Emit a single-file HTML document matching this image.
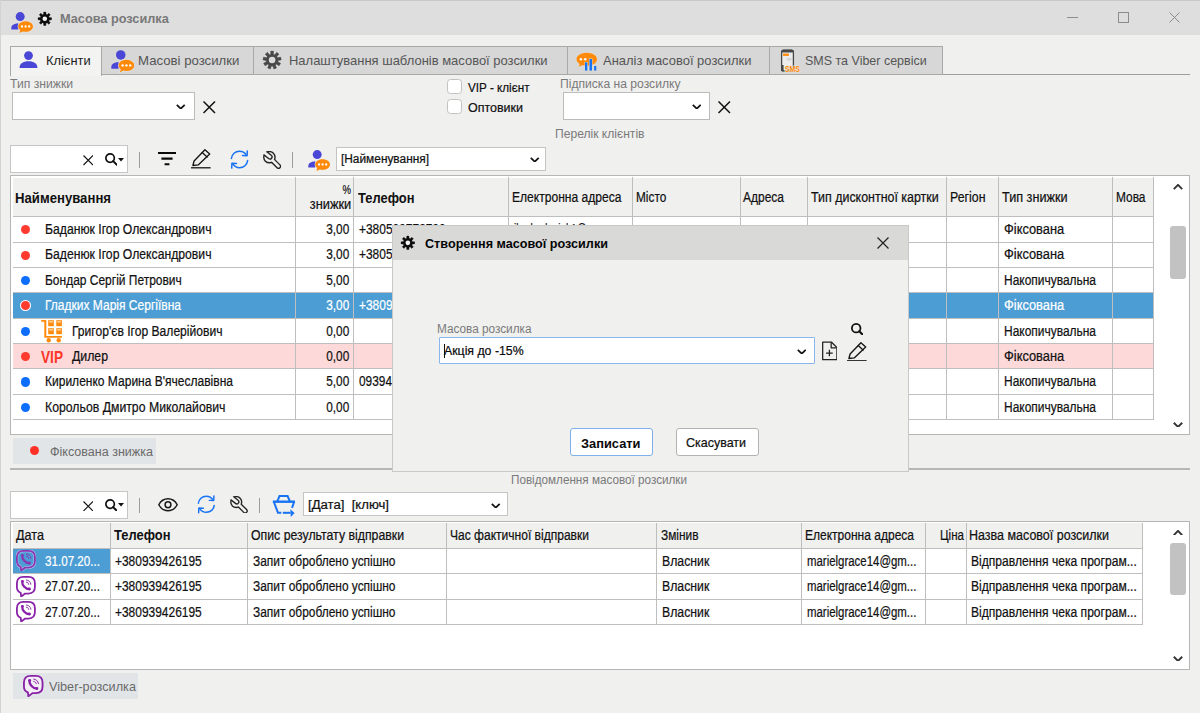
<!DOCTYPE html><html lang="uk"><head><meta charset="utf-8"><title>Масова розсилка</title><style>
html,body{margin:0;padding:0}body{width:1200px;height:713px;position:relative;overflow:hidden;background:#f0f0ef;font-family:"Liberation Sans", sans-serif;}
.a{position:absolute;box-sizing:border-box}.t{position:absolute;white-space:pre;line-height:1;transform-origin:0 50%}.k{-webkit-text-stroke:.22px currentColor}.t.r{transform-origin:100% 50%}
</style></head><body>
<div class="a" style="left:0px;top:0px;width:1200px;height:35px;background:#dedede;"></div>
<div class="a" style="left:0px;top:0px;width:1200px;height:1px;background:#c8c8c8;"></div>
<div class="a" style="left:0px;top:0px;width:1px;height:713px;background:#d3d3d3;"></div>
<svg class="a" style="left:11px;top:11.5px;" width="22.0" height="21.0" viewBox="0 0 22 21"><circle cx="9.2" cy="4.6" r="4.5" fill="#4b47d6"/><path d="M0.3 17.6 L0.3 16 C0.3 13.2 3 11.6 7.2 11.3 L7.2 17.6 Z" fill="#4b47d6"/><ellipse cx="14.6" cy="14.6" rx="8" ry="5.6" fill="#f0f0ef" opacity=".0"/><path d="M14.6 9.2 C18.8 9.2 22 11.5 22 14.5 C22 17.5 18.8 19.8 14.6 19.8 C13.6 19.8 12.7 19.7 11.8 19.4 L8.4 21 L9.2 18.1 C8 17.2 7.2 15.9 7.2 14.5 C7.2 11.5 10.4 9.2 14.6 9.2 Z" fill="#ff8a0a" stroke="#ebebea" stroke-width="1" paint-order="stroke"/><circle cx="11" cy="14.5" r="1.15" fill="#fff"/><circle cx="14.6" cy="14.5" r="1.15" fill="#fff"/><circle cx="18.2" cy="14.5" r="1.15" fill="#fff"/></svg>
<svg class="a" style="left:37.6px;top:11.6px;overflow:visible;" width="13.6" height="13.6" viewBox="0 0 13.6 13.6"><path d="M5.61 2.33 L5.74 0.08 L7.86 0.08 L7.99 2.33 L9.12 2.80 L10.80 1.30 L12.30 2.80 L10.80 4.48 L11.27 5.61 L13.52 5.74 L13.52 7.86 L11.27 7.99 L10.80 9.12 L12.30 10.80 L10.80 12.30 L9.12 10.80 L7.99 11.27 L7.86 13.52 L5.74 13.52 L5.61 11.27 L4.48 10.80 L2.80 12.30 L1.30 10.80 L2.80 9.12 L2.33 7.99 L0.08 7.86 L0.08 5.74 L2.33 5.61 L2.80 4.48 L1.30 2.80 L2.80 1.30 L4.48 2.80 Z" fill="none" stroke="#ececec" stroke-width="1.6" stroke-linejoin="round"/><path d="M5.61 2.33 L5.74 0.08 L7.86 0.08 L7.99 2.33 L9.12 2.80 L10.80 1.30 L12.30 2.80 L10.80 4.48 L11.27 5.61 L13.52 5.74 L13.52 7.86 L11.27 7.99 L10.80 9.12 L12.30 10.80 L10.80 12.30 L9.12 10.80 L7.99 11.27 L7.86 13.52 L5.74 13.52 L5.61 11.27 L4.48 10.80 L2.80 12.30 L1.30 10.80 L2.80 9.12 L2.33 7.99 L0.08 7.86 L0.08 5.74 L2.33 5.61 L2.80 4.48 L1.30 2.80 L2.80 1.30 L4.48 2.80 Z" fill="#0c0c0c" stroke="#0c0c0c" stroke-width="0.5" stroke-linejoin="round"/><circle cx="6.8" cy="6.8" r="2.3120000000000003" fill="#f4f4f4"/></svg>
<span class="t" style="top:11.85px;font-size:13.5px;height:13.5px;color:#787878;font-weight:700;left:60.30px;transform:scaleX(0.9429);">Масова розсилка</span>
<div class="a" style="left:1067px;top:16.8px;width:11px;height:1.5px;background:#8e8e8e;"></div>
<div class="a" style="left:1118px;top:12px;width:11px;height:11px;border:1px solid #8c8c8c;"></div>
<svg class="a" style="left:1169px;top:12px;" width="11" height="11" viewBox="0 0 11 11"><path d="M0.5 0.5 L10.5 10.5 M10.5 0.5 L0.5 10.5" stroke="#8c8c8c" stroke-width="1.0" fill="none"/></svg>
<div class="a" style="left:10px;top:74px;width:1180px;height:1px;background:#9f9f9f;"></div>
<div class="a" style="left:101.4px;top:46px;width:152.6px;height:29px;background:#d7d7d7;border:1px solid #a9a9a9;"></div>
<div class="a" style="left:253px;top:46px;width:315px;height:29px;background:#d7d7d7;border:1px solid #a9a9a9;"></div>
<div class="a" style="left:567px;top:46px;width:203px;height:29px;background:#d7d7d7;border:1px solid #a9a9a9;"></div>
<div class="a" style="left:769px;top:46px;width:173.60000000000002px;height:29px;background:#d7d7d7;border:1px solid #a9a9a9;"></div>
<div class="a" style="left:10px;top:46px;width:92px;height:29.5px;background:#f3f3f2;border:1px solid #a9a9a9;border-bottom:none;"></div>
<svg class="a" style="left:19.4px;top:51.4px;" width="19.0" height="17.0" viewBox="0 0 19 17"><circle cx="9.5" cy="4.6" r="4.4" fill="#4b47d6"/><path d="M0.6 17 C0.6 12.4 4 10.3 9.5 10.3 C15 10.3 18.4 12.4 18.4 17 Z" fill="#4b47d6"/></svg>
<span class="t" style="top:53.75px;font-size:13.5px;height:13.5px;color:#1c1c1c;left:46.00px;transform:scaleX(0.9527);">Клієнти</span>
<svg class="a" style="left:110.7px;top:50.4px;" width="23.3" height="22.3" viewBox="0 0 22 21"><circle cx="9.2" cy="4.6" r="4.5" fill="#4b47d6"/><path d="M0.3 17.6 L0.3 16 C0.3 13.2 3 11.6 7.2 11.3 L7.2 17.6 Z" fill="#4b47d6"/><ellipse cx="14.6" cy="14.6" rx="8" ry="5.6" fill="#f0f0ef" opacity=".0"/><path d="M14.6 9.2 C18.8 9.2 22 11.5 22 14.5 C22 17.5 18.8 19.8 14.6 19.8 C13.6 19.8 12.7 19.7 11.8 19.4 L8.4 21 L9.2 18.1 C8 17.2 7.2 15.9 7.2 14.5 C7.2 11.5 10.4 9.2 14.6 9.2 Z" fill="#ff8a0a" stroke="#ebebea" stroke-width="1" paint-order="stroke"/><circle cx="11" cy="14.5" r="1.15" fill="#fff"/><circle cx="14.6" cy="14.5" r="1.15" fill="#fff"/><circle cx="18.2" cy="14.5" r="1.15" fill="#fff"/></svg>
<span class="t" style="top:53.75px;font-size:13.5px;height:13.5px;color:#555;left:138.00px;transform:scaleX(0.9772);">Масові розсилки</span>
<svg class="a" style="left:263px;top:51px;overflow:visible;" width="18.2" height="18.2" viewBox="0 0 18.2 18.2"><path d="M7.73 3.25 L7.65 0.12 L10.55 0.12 L10.47 3.25 L11.81 3.74 L13.76 1.28 L15.99 3.15 L13.91 5.50 L14.62 6.73 L17.69 6.11 L18.20 8.97 L15.10 9.44 L14.85 10.84 L17.61 12.33 L16.15 14.85 L13.48 13.21 L12.39 14.13 L13.54 17.04 L10.81 18.04 L9.81 15.06 L8.39 15.06 L7.39 18.04 L4.66 17.04 L5.81 14.13 L4.72 13.21 L2.05 14.85 L0.59 12.33 L3.35 10.84 L3.10 9.44 L0.00 8.97 L0.51 6.11 L3.58 6.73 L4.29 5.50 L2.21 3.15 L4.44 1.28 L6.39 3.74 Z" fill="none" stroke="#dedede" stroke-width="1.6" stroke-linejoin="round"/><path d="M7.73 3.25 L7.65 0.12 L10.55 0.12 L10.47 3.25 L11.81 3.74 L13.76 1.28 L15.99 3.15 L13.91 5.50 L14.62 6.73 L17.69 6.11 L18.20 8.97 L15.10 9.44 L14.85 10.84 L17.61 12.33 L16.15 14.85 L13.48 13.21 L12.39 14.13 L13.54 17.04 L10.81 18.04 L9.81 15.06 L8.39 15.06 L7.39 18.04 L4.66 17.04 L5.81 14.13 L4.72 13.21 L2.05 14.85 L0.59 12.33 L3.35 10.84 L3.10 9.44 L0.00 8.97 L0.51 6.11 L3.58 6.73 L4.29 5.50 L2.21 3.15 L4.44 1.28 L6.39 3.74 Z" fill="#484848" stroke="#484848" stroke-width="0.5" stroke-linejoin="round"/><circle cx="9.1" cy="9.1" r="3.276" fill="#dadada"/></svg>
<span class="t" style="top:53.75px;font-size:13.5px;height:13.5px;color:#555;left:289.40px;transform:scaleX(0.9607);">Налаштування шаблонів масової розсилки</span>
<svg class="a" style="left:576px;top:50px;" width="22" height="21" viewBox="0 0 22 21"><path d="M10.7 2.4 C16.6 2.4 21.3 5.4 21.3 9.3 C21.3 13.2 16.6 16.2 10.7 16.2 C9.2 16.2 7.8 16 6.5 15.6 L2 17.2 L3.4 13.9 C1.4 12.7 0.2 11.1 0.2 9.3 C0.2 5.4 4.8 2.4 10.7 2.4 Z" fill="#ff8a0a" stroke="#e2e2e2" stroke-width=".6"/><circle cx="4.9" cy="9.2" r="1.25" fill="#fff"/><circle cx="9.2" cy="9.2" r="1.25" fill="#fff"/><g fill="#1873f5" stroke="#dedad2" stroke-width=".9" paint-order="stroke"><rect x="9" y="12.4" width="2.3" height="8.2"/><rect x="13.5" y="9" width="2.5" height="11.6"/><rect x="18.1" y="16" width="2.2" height="4.6"/></g></svg>
<span class="t" style="top:53.75px;font-size:13.5px;height:13.5px;color:#555;left:603.30px;transform:scaleX(0.9602);">Аналіз масової розсилки</span>
<svg class="a" style="left:780px;top:49px;" width="21" height="23.5" viewBox="0 0 21 23.5"><rect x="1.6" y="1.4" width="11.8" height="20.4" rx="1.6" fill="#ececec" stroke="#484848" stroke-width="1.3"/><path d="M1 3.4 C1 1.6 2 0.5 3.6 0.5 L11.4 0.5 C13 0.5 14 1.6 14 3.4 Z" fill="#484848"/><path d="M1 16 L3.6 16 L3.6 22.4 L2.4 22.4 C1.6 22.4 1 21.8 1 21 Z" fill="#484848"/><rect x="3" y="4.6" width="5.9" height="2.3" fill="#ff8a0a"/><rect x="6.6" y="9" width="5" height="2.4" rx="1" fill="#d4d4d4"/><text x="4.8" y="22.7" font-family="Liberation Sans, sans-serif" font-weight="700" font-size="9.6" fill="#ff8a0a" stroke="#e6e4e0" stroke-width="1.1" paint-order="stroke" textLength="15.2" lengthAdjust="spacingAndGlyphs">SMS</text></svg>
<span class="t" style="top:53.75px;font-size:13.5px;height:13.5px;color:#555;left:805.00px;transform:scaleX(0.9251);">SMS та Viber сервіси</span>
<span class="t" style="top:77.65px;font-size:12.3px;height:12.3px;color:#7a7a7a;left:10.30px;transform:scaleX(0.9921);">Тип знижки</span>
<div class="a" style="left:12.4px;top:92.4px;width:182.4px;height:27.4px;background:#fff;border:1.3px solid #bcbcbc;"></div>
<svg class="a" style="left:176px;top:103.6px;" width="9.5" height="5.6" viewBox="0 0 9.5 5.6"><path d="M0.8 0.8 L4.75 4.699999999999999 L8.7 0.8" stroke="#111" stroke-width="1.7" fill="none" stroke-linejoin="miter"/></svg>
<svg class="a" style="left:203px;top:101px;" width="12.5" height="12.5" viewBox="0 0 12.5 12.5"><path d="M0.5 0.5 L12.0 12.0 M12.0 0.5 L0.5 12.0" stroke="#111" stroke-width="1.5" fill="none"/></svg>
<div class="a" style="left:446.9px;top:78.9px;width:15.6px;height:15.6px;background:#fff;border:1.4px solid #c2c2c2;border-radius:3.5px;"></div>
<div class="a" style="left:446.9px;top:98.9px;width:15.6px;height:15.6px;background:#fff;border:1.4px solid #c2c2c2;border-radius:3.5px;"></div>
<span class="t k" style="top:81.90px;font-size:12.4px;height:12.4px;color:#111;left:468.00px;transform:scaleX(0.9439);">VIP - клієнт</span>
<span class="t k" style="top:101.90px;font-size:12.4px;height:12.4px;color:#111;left:468.00px;transform:scaleX(1.0069);">Оптовики</span>
<span class="t" style="top:77.65px;font-size:12.3px;height:12.3px;color:#7a7a7a;left:560.00px;transform:scaleX(0.9854);">Підписка на розсилку</span>
<div class="a" style="left:562.6px;top:92.4px;width:147.2px;height:27.4px;background:#fff;border:1.3px solid #bcbcbc;"></div>
<svg class="a" style="left:691.5px;top:103.6px;" width="9.5" height="5.6" viewBox="0 0 9.5 5.6"><path d="M0.8 0.8 L4.75 4.699999999999999 L8.7 0.8" stroke="#111" stroke-width="1.7" fill="none" stroke-linejoin="miter"/></svg>
<svg class="a" style="left:718px;top:101px;" width="12.5" height="12.5" viewBox="0 0 12.5 12.5"><path d="M0.5 0.5 L12.0 12.0 M12.0 0.5 L0.5 12.0" stroke="#111" stroke-width="1.5" fill="none"/></svg>
<span class="t" style="top:128.05px;font-size:12.3px;height:12.3px;color:#7a7a7a;left:554.50px;transform:scaleX(0.9830);">Перелік клієнтів</span>
<div class="a" style="left:10px;top:145px;width:117.5px;height:28px;background:#fff;border:1px solid #c6c6c6;"></div>
<svg class="a" style="left:82.5px;top:155px;" width="10.5" height="10.5" viewBox="0 0 10.5 10.5"><path d="M0.5 0.5 L10.0 10.0 M10.0 0.5 L0.5 10.0" stroke="#111" stroke-width="1.1" fill="none"/></svg>
<svg class="a" style="left:104.5px;top:153px;" width="12.5" height="12.5" viewBox="0 0 12.5 12.5"><circle cx="5.1" cy="5.1" r="4.25" stroke="#111" stroke-width="1.7" fill="none"/><path d="M8.16 8.16 L11.8 11.8" stroke="#111" stroke-width="2.0" stroke-linecap="round"/></svg>
<svg class="a" style="left:117.5px;top:157.5px;" width="6" height="4" viewBox="0 0 6 4"><path d="M0 0 L6 0 L3 3.6 Z" fill="#111"/></svg>
<div class="a" style="left:138.6px;top:152px;width:1.5px;height:15.5px;background:#9c9c9c;"></div>
<svg class="a" style="left:158px;top:152px;" width="18" height="14" viewBox="0 0 18 14"><path d="M0 1 L18 1 M3.4 6.6 L14.6 6.6 M6.6 12.2 L11.4 12.2" stroke="#0a0a0a" stroke-width="2.1" fill="none"/></svg>
<svg class="a" style="left:190.6px;top:149.2px;" width="20" height="19.5" viewBox="0 0 20 19.5"><g fill="none" stroke="#151515" stroke-width="1.35" stroke-linejoin="round" stroke-linecap="round"><path d="M1.9 16.5 L3.1 12 L13.9 0.7 L18.7 5.1 L7.2 15.9 Z"/><path d="M11.2 3.6 L16.1 8"/></g><path d="M0 18.8 L19.6 18.8" stroke="#151515" stroke-width="1.3"/></svg>
<svg class="a" style="left:230px;top:149.7px;" width="19" height="19" viewBox="0 0 19 19"><g fill="none" stroke="#1873f5" stroke-width="1.5" stroke-linecap="round" stroke-linejoin="round"><path d="M1.4 8.4 C1.9 4.3 5.2 1.3 9.4 1.3 C12.4 1.3 14.9 2.8 16.3 5.1"/><path d="M17.3 0.9 L17.1 5.7 L12.5 5.5"/><path d="M17.6 10.6 C17.1 14.7 13.8 17.7 9.6 17.7 C6.6 17.7 4.1 16.2 2.7 13.9"/><path d="M1.7 18.1 L1.9 13.3 L6.5 13.5"/></g></svg>
<svg class="a" style="left:263px;top:150.5px;" width="18" height="18" viewBox="0 0 18 18"><defs><clipPath id="wc263_150"><circle cx="6.4" cy="6.2" r="6.3"/></clipPath></defs><circle cx="6.4" cy="6.2" r="6.3" fill="#222"/><path d="M8 7.8 L15.5 15.3" stroke="#222" stroke-width="5.4" stroke-linecap="round"/><circle cx="6.4" cy="6.2" r="4.9" fill="#f0f0ef"/><path d="M8 7.8 L15.5 15.3" stroke="#f0f0ef" stroke-width="2.7" stroke-linecap="round"/><path d="M-1 -0.4 L6.9 5.9" stroke="#222" stroke-width="5.6" stroke-linecap="round" clip-path="url(#wc263_150)"/><path d="M-3 -2 L6.9 5.9" stroke="#f0f0ef" stroke-width="2.9" stroke-linecap="round"/></svg>
<div class="a" style="left:291.8px;top:152px;width:1.5px;height:15.5px;background:#9c9c9c;"></div>
<svg class="a" style="left:308px;top:149.5px;" width="22.0" height="21.0" viewBox="0 0 22 21"><circle cx="9.2" cy="4.6" r="4.5" fill="#4b47d6"/><path d="M0.3 17.6 L0.3 16 C0.3 13.2 3 11.6 7.2 11.3 L7.2 17.6 Z" fill="#4b47d6"/><ellipse cx="14.6" cy="14.6" rx="8" ry="5.6" fill="#f0f0ef" opacity=".0"/><path d="M14.6 9.2 C18.8 9.2 22 11.5 22 14.5 C22 17.5 18.8 19.8 14.6 19.8 C13.6 19.8 12.7 19.7 11.8 19.4 L8.4 21 L9.2 18.1 C8 17.2 7.2 15.9 7.2 14.5 C7.2 11.5 10.4 9.2 14.6 9.2 Z" fill="#ff8a0a" stroke="#ebebea" stroke-width="1" paint-order="stroke"/><circle cx="11" cy="14.5" r="1.15" fill="#fff"/><circle cx="14.6" cy="14.5" r="1.15" fill="#fff"/><circle cx="18.2" cy="14.5" r="1.15" fill="#fff"/></svg>
<div class="a" style="left:336.4px;top:146.8px;width:209.2px;height:23.8px;background:#fff;border:1.3px solid #c4c4c4;"></div>
<span class="t k" style="top:153.20px;font-size:12px;height:12px;color:#111;left:341.00px;transform:scaleX(0.9895);">[Найменування]</span>
<svg class="a" style="left:530px;top:156.5px;" width="9.5" height="5.6" viewBox="0 0 9.5 5.6"><path d="M0.8 0.8 L4.75 4.699999999999999 L8.7 0.8" stroke="#111" stroke-width="1.7" fill="none" stroke-linejoin="miter"/></svg>
<div class="a" style="left:10px;top:175.3px;width:1180px;height:259.4px;background:#fff;border:1px solid #b5b5b5;"></div>
<div class="a" style="left:12.6px;top:178px;width:1140.4px;height:39px;background:#f0f0ef;"></div>
<div class="a" style="left:12.6px;top:293px;width:1140.4px;height:25.2px;background:#4b9dd4;"></div>
<div class="a" style="left:12.6px;top:343.6px;width:1140.4px;height:25.4px;background:#fdd9d9;"></div>
<div class="a" style="left:294.5px;top:177px;width:1px;height:243px;background:#bebebe;"></div>
<div class="a" style="left:353.0px;top:177px;width:1px;height:243px;background:#bebebe;"></div>
<div class="a" style="left:508.0px;top:177px;width:1px;height:243px;background:#bebebe;"></div>
<div class="a" style="left:631.5px;top:177px;width:1px;height:243px;background:#bebebe;"></div>
<div class="a" style="left:740.0px;top:177px;width:1px;height:243px;background:#bebebe;"></div>
<div class="a" style="left:806.5px;top:177px;width:1px;height:243px;background:#bebebe;"></div>
<div class="a" style="left:945.5px;top:177px;width:1px;height:243px;background:#bebebe;"></div>
<div class="a" style="left:997.5px;top:177px;width:1px;height:243px;background:#bebebe;"></div>
<div class="a" style="left:1111.5px;top:177px;width:1px;height:243px;background:#bebebe;"></div>
<div class="a" style="left:1152.5px;top:177px;width:1px;height:243px;background:#bebebe;"></div>
<div class="a" style="left:12.6px;top:216px;width:1140.9px;height:1px;background:#bebebe;"></div>
<div class="a" style="left:12.6px;top:242px;width:1140.9px;height:1px;background:#bebebe;"></div>
<div class="a" style="left:12.6px;top:267px;width:1140.9px;height:1px;background:#bebebe;"></div>
<div class="a" style="left:12.6px;top:292px;width:1140.9px;height:1px;background:#bebebe;"></div>
<div class="a" style="left:12.6px;top:318px;width:1140.9px;height:1px;background:#bebebe;"></div>
<div class="a" style="left:12.6px;top:343px;width:1140.9px;height:1px;background:#bebebe;"></div>
<div class="a" style="left:12.6px;top:368px;width:1140.9px;height:1px;background:#bebebe;"></div>
<div class="a" style="left:12.6px;top:394px;width:1140.9px;height:1px;background:#bebebe;"></div>
<div class="a" style="left:12.6px;top:419px;width:1140.9px;height:1px;background:#bebebe;"></div>
<span class="t" style="top:190.65px;font-size:14.5px;height:14.5px;color:#111;font-weight:700;left:15.20px;transform:scaleX(0.9071);">Найменування</span>
<span class="t r k" style="top:182.75px;font-size:13.5px;height:13.5px;color:#111;right:848.50px;transform:scaleX(0.7074);">%</span>
<span class="t r k" style="top:197.30px;font-size:14px;height:14px;color:#111;right:848.50px;transform:scaleX(0.9165);">знижки</span>
<span class="t" style="top:190.65px;font-size:14.5px;height:14.5px;color:#111;font-weight:700;left:357.50px;transform:scaleX(0.8911);">Телефон</span>
<span class="t k" style="top:190.00px;font-size:14px;height:14px;color:#111;left:511.60px;transform:scaleX(0.8613);">Електронна адреса</span>
<span class="t k" style="top:190.00px;font-size:14px;height:14px;color:#111;left:635.50px;transform:scaleX(0.8457);">Місто</span>
<span class="t k" style="top:190.00px;font-size:14px;height:14px;color:#111;left:743.00px;transform:scaleX(0.8564);">Адреса</span>
<span class="t k" style="top:190.00px;font-size:14px;height:14px;color:#111;left:810.80px;transform:scaleX(0.8882);">Тип дисконтної картки</span>
<span class="t k" style="top:190.00px;font-size:14px;height:14px;color:#111;left:949.50px;transform:scaleX(0.8820);">Регіон</span>
<span class="t k" style="top:190.00px;font-size:14px;height:14px;color:#111;left:1002.00px;transform:scaleX(0.9033);">Тип знижки</span>
<span class="t k" style="top:190.00px;font-size:14px;height:14px;color:#111;left:1115.50px;transform:scaleX(0.8508);">Мова</span>
<div class="a" style="left:21px;top:225.15px;width:9.2px;height:9.2px;background:#ff3b30;border-radius:5px;"></div>
<span class="t k" style="top:222.05px;font-size:14px;height:14px;color:#111;left:44.50px;transform:scaleX(0.8712);">Баданюк Ігор Олександрович</span>
<span class="t r k" style="top:222.05px;font-size:14px;height:14px;color:#111;right:851.00px;transform:scaleX(0.8440);">3,00</span>
<span class="t k" style="top:222.05px;font-size:14px;height:14px;color:#111;left:358.90px;transform:scaleX(0.8533);">+380509778790</span>
<span class="t k" style="top:222.05px;font-size:14px;height:14px;color:#111;left:513.60px;transform:scaleX(0.7115);">ihorbadaniuk1@...</span>
<span class="t k" style="top:222.05px;font-size:14px;height:14px;color:#111;left:1003.80px;transform:scaleX(0.9180);">Фіксована</span>
<div class="a" style="left:21px;top:250.55px;width:9.2px;height:9.2px;background:#ff3b30;border-radius:5px;"></div>
<span class="t k" style="top:247.45px;font-size:14px;height:14px;color:#111;left:44.50px;transform:scaleX(0.8712);">Баденюк Ігор Олександрович</span>
<span class="t r k" style="top:247.45px;font-size:14px;height:14px;color:#111;right:851.00px;transform:scaleX(0.8440);">3,00</span>
<span class="t k" style="top:247.45px;font-size:14px;height:14px;color:#111;left:358.90px;transform:scaleX(0.8533);">+380509778791</span>
<span class="t k" style="top:247.45px;font-size:14px;height:14px;color:#111;left:1003.80px;transform:scaleX(0.9180);">Фіксована</span>
<div class="a" style="left:21px;top:275.90000000000003px;width:9.2px;height:9.2px;background:#0d6efd;border-radius:5px;"></div>
<span class="t k" style="top:272.80px;font-size:14px;height:14px;color:#111;left:44.50px;transform:scaleX(0.8557);">Бондар Сергій Петрович</span>
<span class="t r k" style="top:272.80px;font-size:14px;height:14px;color:#111;right:851.00px;transform:scaleX(0.8440);">5,00</span>
<span class="t k" style="top:272.80px;font-size:14px;height:14px;color:#111;left:1003.80px;transform:scaleX(0.8541);">Накопичувальна</span>
<div class="a" style="left:20.2px;top:300.45000000000005px;width:10.8px;height:10.8px;background:#fff;border-radius:6px;"></div>
<div class="a" style="left:21px;top:301.25000000000006px;width:9.2px;height:9.2px;background:#ff3b30;border-radius:5px;"></div>
<span class="t k" style="top:298.15px;font-size:14px;height:14px;color:#fff;left:44.50px;transform:scaleX(0.8581);">Гладких Марія Сергіївна</span>
<span class="t r k" style="top:298.15px;font-size:14px;height:14px;color:#fff;right:851.00px;transform:scaleX(0.8440);">3,00</span>
<span class="t k" style="top:298.15px;font-size:14px;height:14px;color:#fff;left:358.90px;transform:scaleX(0.8533);">+380939426195</span>
<span class="t k" style="top:298.15px;font-size:14px;height:14px;color:#fff;left:1003.80px;transform:scaleX(0.9180);">Фіксована</span>
<div class="a" style="left:21px;top:326.6px;width:9.2px;height:9.2px;background:#0d6efd;border-radius:5px;"></div>
<span class="t k" style="top:323.50px;font-size:14px;height:14px;color:#111;left:72.00px;transform:scaleX(0.8639);">Григор'єв Ігор Валерійович</span>
<span class="t r k" style="top:323.50px;font-size:14px;height:14px;color:#111;right:851.00px;transform:scaleX(0.8440);">0,00</span>
<span class="t k" style="top:323.50px;font-size:14px;height:14px;color:#111;left:1003.80px;transform:scaleX(0.8541);">Накопичувальна</span>
<div class="a" style="left:21px;top:352.00000000000006px;width:9.2px;height:9.2px;background:#ff3b30;border-radius:5px;"></div>
<span class="t k" style="top:348.90px;font-size:14px;height:14px;color:#111;left:72.00px;transform:scaleX(0.8770);">Дилер</span>
<span class="t r k" style="top:348.90px;font-size:14px;height:14px;color:#111;right:851.00px;transform:scaleX(0.8440);">0,00</span>
<span class="t k" style="top:348.90px;font-size:14px;height:14px;color:#111;left:1003.80px;transform:scaleX(0.9180);">Фіксована</span>
<div class="a" style="left:21px;top:377.40000000000003px;width:9.2px;height:9.2px;background:#0d6efd;border-radius:5px;"></div>
<span class="t k" style="top:374.30px;font-size:14px;height:14px;color:#111;left:44.50px;transform:scaleX(0.8585);">Кириленко Марина В'ячеславівна</span>
<span class="t r k" style="top:374.30px;font-size:14px;height:14px;color:#111;right:851.00px;transform:scaleX(0.8440);">5,00</span>
<span class="t k" style="top:374.30px;font-size:14px;height:14px;color:#111;left:358.90px;transform:scaleX(0.8475);">0939426195</span>
<span class="t k" style="top:374.30px;font-size:14px;height:14px;color:#111;left:1003.80px;transform:scaleX(0.8541);">Накопичувальна</span>
<div class="a" style="left:21px;top:402.8px;width:9.2px;height:9.2px;background:#0d6efd;border-radius:5px;"></div>
<span class="t k" style="top:399.70px;font-size:14px;height:14px;color:#111;left:44.50px;transform:scaleX(0.8764);">Корольов Дмитро Миколайович</span>
<span class="t r k" style="top:399.70px;font-size:14px;height:14px;color:#111;right:851.00px;transform:scaleX(0.8440);">0,00</span>
<span class="t k" style="top:399.70px;font-size:14px;height:14px;color:#111;left:1003.80px;transform:scaleX(0.8541);">Накопичувальна</span>
<svg class="a" style="left:41px;top:320px;" width="22" height="23" viewBox="0 0 22 23"><g fill="#ff8a0a"><path d="M0.2 0.1 L5.3 0.1 L5.3 15.9 L20.9 15.9 L20.9 17.8 L3.3 17.8 L3.3 1.8 L0.2 1.8 Z"/><rect x="7.2" y="0.2" width="5.6" height="6"/><rect x="15.3" y="0.2" width="5.6" height="6"/><rect x="7.2" y="8.2" width="5.6" height="6"/><rect x="15.3" y="8.2" width="5.6" height="6"/><circle cx="7.7" cy="20.2" r="2.2"/><circle cx="17.7" cy="20.2" r="2.2"/></g><path d="M8.2 1.9 L11.8 1.9 M16.3 1.9 L19.9 1.9 M8.2 9.9 L11.8 9.9 M16.3 9.9 L19.9 9.9" stroke="#ffe3c2" stroke-width="1.1"/></svg>
<span class="t" style="top:349.05px;font-size:16.5px;height:16.5px;color:#fb3528;font-weight:700;left:41.20px;transform:scaleX(0.8268);">VIP</span>
<svg class="a" style="left:1173.4px;top:184.2px;" width="10" height="5.8" viewBox="0 0 10 5.8"><path d="M0.8 5.2 L5.0 0.9 L9.2 5.2" stroke="#333" stroke-width="1.9" fill="none" stroke-linejoin="miter"/></svg>
<div class="a" style="left:1170.2px;top:226.3px;width:16px;height:52.3px;background:#c2c2c2;border-radius:3px;"></div>
<svg class="a" style="left:1173.4px;top:421.5px;" width="10" height="5.8" viewBox="0 0 10 5.8"><path d="M0.8 0.8 L5.0 4.8999999999999995 L9.2 0.8" stroke="#333" stroke-width="1.9" fill="none" stroke-linejoin="miter"/></svg>
<div class="a" style="left:13px;top:438px;width:142.6px;height:25.5px;background:#e2e5e8;"></div>
<div class="a" style="left:29.9px;top:445.9px;width:9.3px;height:9.3px;background:#ff3126;border-radius:5px;"></div>
<span class="t" style="top:445.95px;font-size:12.5px;height:12.5px;color:#6a6a6a;left:50.00px;transform:scaleX(1.0030);">Фіксована знижка</span>
<div class="a" style="left:10px;top:468px;width:1180px;height:2px;background:#b6b6b6;"></div>
<span class="t" style="top:473.65px;font-size:12.3px;height:12.3px;color:#7a7a7a;left:511.00px;transform:scaleX(0.9510);">Повідомлення масової розсилки</span>
<div class="a" style="left:10px;top:490.5px;width:117.5px;height:28px;background:#fff;border:1px solid #c6c6c6;"></div>
<svg class="a" style="left:82.5px;top:500.5px;" width="10.5" height="10.5" viewBox="0 0 10.5 10.5"><path d="M0.5 0.5 L10.0 10.0 M10.0 0.5 L0.5 10.0" stroke="#111" stroke-width="1.1" fill="none"/></svg>
<svg class="a" style="left:104.5px;top:498.5px;" width="12.5" height="12.5" viewBox="0 0 12.5 12.5"><circle cx="5.1" cy="5.1" r="4.25" stroke="#111" stroke-width="1.7" fill="none"/><path d="M8.16 8.16 L11.8 11.8" stroke="#111" stroke-width="2.0" stroke-linecap="round"/></svg>
<svg class="a" style="left:117.5px;top:503.0px;" width="6" height="4" viewBox="0 0 6 4"><path d="M0 0 L6 0 L3 3.6 Z" fill="#111"/></svg>
<div class="a" style="left:138.6px;top:497.5px;width:1.5px;height:15.5px;background:#9c9c9c;"></div>
<svg class="a" style="left:157.5px;top:498px;" width="20" height="13.5" viewBox="0 0 20 13.5"><path d="M0.8 6.75 C3 2.6 6.6 0.8 10 0.8 C13.4 0.8 17 2.6 19.2 6.75 C17 10.9 13.4 12.7 10 12.7 C6.6 12.7 3 10.9 0.8 6.75 Z" fill="none" stroke="#1a1a1a" stroke-width="1.5"/><circle cx="10" cy="6.75" r="2.9" fill="none" stroke="#1a1a1a" stroke-width="1.5"/></svg>
<svg class="a" style="left:197px;top:495.3px;" width="18.6" height="18.6" viewBox="0 0 19 19"><g fill="none" stroke="#1873f5" stroke-width="1.5" stroke-linecap="round" stroke-linejoin="round"><path d="M1.4 8.4 C1.9 4.3 5.2 1.3 9.4 1.3 C12.4 1.3 14.9 2.8 16.3 5.1"/><path d="M17.3 0.9 L17.1 5.7 L12.5 5.5"/><path d="M17.6 10.6 C17.1 14.7 13.8 17.7 9.6 17.7 C6.6 17.7 4.1 16.2 2.7 13.9"/><path d="M1.7 18.1 L1.9 13.3 L6.5 13.5"/></g></svg>
<svg class="a" style="left:230px;top:495.7px;" width="17.6" height="17.6" viewBox="0 0 18 18"><defs><clipPath id="wc230_495"><circle cx="6.4" cy="6.2" r="6.3"/></clipPath></defs><circle cx="6.4" cy="6.2" r="6.3" fill="#222"/><path d="M8 7.8 L15.5 15.3" stroke="#222" stroke-width="5.4" stroke-linecap="round"/><circle cx="6.4" cy="6.2" r="4.9" fill="#f0f0ef"/><path d="M8 7.8 L15.5 15.3" stroke="#f0f0ef" stroke-width="2.7" stroke-linecap="round"/><path d="M-1 -0.4 L6.9 5.9" stroke="#222" stroke-width="5.6" stroke-linecap="round" clip-path="url(#wc230_495)"/><path d="M-3 -2 L6.9 5.9" stroke="#f0f0ef" stroke-width="2.9" stroke-linecap="round"/></svg>
<div class="a" style="left:258.8px;top:497.5px;width:1.5px;height:15.5px;background:#9c9c9c;"></div>
<svg class="a" style="left:272.1px;top:494.5px;" width="24" height="22" viewBox="0 0 24 22"><g fill="none" stroke="#1873f5" stroke-width="2" stroke-linejoin="miter" stroke-linecap="butt"><path d="M5.3 6.4 L7.5 1.1 L15.6 1.1 L17.9 6.4"/><path d="M0.8 6.7 L23 6.7" stroke-width="2.4"/><path d="M1.9 7 L6 17.8 L9.3 17.8"/><path d="M22.1 7 L20 12.9"/><path d="M10.8 17.8 L18.6 17.8"/></g><path d="M18.3 14.2 L22.6 17.9 L18.8 21.9 Z" fill="#1873f5"/></svg>
<div class="a" style="left:302.6px;top:492.2px;width:205.4px;height:24.2px;background:#fff;border:1.3px solid #c4c4c4;"></div>
<span class="t k" style="top:499.00px;font-size:12px;height:12px;color:#111;left:308.00px;transform:scaleX(1.0953);">[Дата]  [ключ]</span>
<svg class="a" style="left:491px;top:502.5px;" width="9.5" height="5.6" viewBox="0 0 9.5 5.6"><path d="M0.8 0.8 L4.75 4.699999999999999 L8.7 0.8" stroke="#111" stroke-width="1.7" fill="none" stroke-linejoin="miter"/></svg>
<div class="a" style="left:10px;top:520.7px;width:1180px;height:149.6px;background:#fff;border:1px solid #b5b5b5;"></div>
<div class="a" style="left:12.6px;top:523.2px;width:1129.9px;height:25px;background:#f0f0ef;"></div>
<div class="a" style="left:12.6px;top:548.6px;width:97.6px;height:24.6px;background:#4b9dd4;"></div>
<div class="a" style="left:110.0px;top:523px;width:1px;height:101.8px;background:#bebebe;"></div>
<div class="a" style="left:247.0px;top:523px;width:1px;height:101.8px;background:#bebebe;"></div>
<div class="a" style="left:446.0px;top:523px;width:1px;height:101.8px;background:#bebebe;"></div>
<div class="a" style="left:656.0px;top:523px;width:1px;height:101.8px;background:#bebebe;"></div>
<div class="a" style="left:801.0px;top:523px;width:1px;height:101.8px;background:#bebebe;"></div>
<div class="a" style="left:924.5px;top:523px;width:1px;height:101.8px;background:#bebebe;"></div>
<div class="a" style="left:965.5px;top:523px;width:1px;height:101.8px;background:#bebebe;"></div>
<div class="a" style="left:1141.5px;top:523px;width:1px;height:101.8px;background:#bebebe;"></div>
<div class="a" style="left:12.6px;top:548px;width:1129.9px;height:1px;background:#bebebe;"></div>
<div class="a" style="left:12.6px;top:573px;width:1129.9px;height:1px;background:#bebebe;"></div>
<div class="a" style="left:12.6px;top:599px;width:1129.9px;height:1px;background:#bebebe;"></div>
<div class="a" style="left:12.6px;top:624px;width:1129.9px;height:1px;background:#bebebe;"></div>
<span class="t k" style="top:527.90px;font-size:14px;height:14px;color:#111;left:15.70px;transform:scaleX(0.9028);">Дата</span>
<span class="t" style="top:528.35px;font-size:14.5px;height:14.5px;color:#111;font-weight:700;left:113.90px;transform:scaleX(0.8911);">Телефон</span>
<span class="t k" style="top:527.90px;font-size:14px;height:14px;color:#111;left:250.50px;transform:scaleX(0.8782);">Опис результату відправки</span>
<span class="t k" style="top:527.90px;font-size:14px;height:14px;color:#111;left:450.40px;transform:scaleX(0.8598);">Час фактичної відправки</span>
<span class="t k" style="top:527.90px;font-size:14px;height:14px;color:#111;left:660.70px;transform:scaleX(0.8487);">Змінив</span>
<span class="t k" style="top:527.90px;font-size:14px;height:14px;color:#111;left:804.70px;transform:scaleX(0.8582);">Електронна адреса</span>
<span class="t r k" style="top:527.90px;font-size:14px;height:14px;color:#111;right:236.50px;transform:scaleX(0.8280);">Ціна</span>
<span class="t k" style="top:527.90px;font-size:14px;height:14px;color:#111;left:969.40px;transform:scaleX(0.8921);">Назва масової розсилки</span>
<svg class="a" style="left:15.8px;top:550.0999999999999px;" width="19.8" height="21.4" viewBox="0 0 20 21.6"><path d="M7.4 0.9 L12.6 0.9 C17 0.9 19.1 3.2 19.1 7.4 L19.1 11.2 C19.1 15.4 17 17.7 12.6 17.7 L9.2 17.7 L5.2 20.9 L4.8 17 C2.2 16.1 0.9 14.2 0.9 11.2 L0.9 7.4 C0.9 3.2 3 0.9 7.4 0.9 Z" fill="none" stroke="#b9c6ea" stroke-width="2.8" stroke-linejoin="round"/><path d="M7.4 0.9 L12.6 0.9 C17 0.9 19.1 3.2 19.1 7.4 L19.1 11.2 C19.1 15.4 17 17.7 12.6 17.7 L9.2 17.7 L5.2 20.9 L4.8 17 C2.2 16.1 0.9 14.2 0.9 11.2 L0.9 7.4 C0.9 3.2 3 0.9 7.4 0.9 Z" fill="none" stroke="#8a35b4" stroke-width="1.8" stroke-linejoin="round"/><path d="M6.3 5.6 C6 9.2 9.6 13.2 13.6 13.3" fill="none" stroke="#8a35b4" stroke-width="2.3" stroke-linecap="round"/><circle cx="6.5" cy="5.4" r="1.45" fill="#8a35b4"/><circle cx="13.5" cy="13.1" r="1.45" fill="#8a35b4"/><path d="M10.4 4 C12.9 4.2 14.8 5.9 15.1 8.4 M10.5 6.2 C11.8 6.4 12.7 7.2 12.9 8.5" fill="none" stroke="#8a35b4" stroke-width="0.95" stroke-linecap="round"/></svg>
<span class="t k" style="top:553.80px;font-size:14px;height:14px;color:#fff;left:45.00px;transform:scaleX(0.8312);">31.07.20...</span>
<span class="t k" style="top:553.80px;font-size:14px;height:14px;color:#111;left:115.30px;transform:scaleX(0.8533);">+380939426195</span>
<span class="t k" style="top:553.80px;font-size:14px;height:14px;color:#111;left:252.80px;transform:scaleX(0.8515);">Запит оброблено успішно</span>
<span class="t k" style="top:553.80px;font-size:14px;height:14px;color:#111;left:661.70px;transform:scaleX(0.8762);">Власник</span>
<span class="t k" style="top:553.80px;font-size:14px;height:14px;color:#111;left:807.00px;transform:scaleX(0.8161);">marielgrace14@gm...</span>
<span class="t k" style="top:553.80px;font-size:14px;height:14px;color:#111;left:971.00px;transform:scaleX(0.8631);">Відправлення чека програм...</span>
<svg class="a" style="left:15.8px;top:575.5999999999999px;" width="19.8" height="21.4" viewBox="0 0 20 21.6"><path d="M7.4 0.9 L12.6 0.9 C17 0.9 19.1 3.2 19.1 7.4 L19.1 11.2 C19.1 15.4 17 17.7 12.6 17.7 L9.2 17.7 L5.2 20.9 L4.8 17 C2.2 16.1 0.9 14.2 0.9 11.2 L0.9 7.4 C0.9 3.2 3 0.9 7.4 0.9 Z" fill="#fff" stroke="#8a22a8" stroke-width="1.8" stroke-linejoin="round"/><path d="M6.3 5.6 C6 9.2 9.6 13.2 13.6 13.3" fill="none" stroke="#8a22a8" stroke-width="2.3" stroke-linecap="round"/><circle cx="6.5" cy="5.4" r="1.45" fill="#8a22a8"/><circle cx="13.5" cy="13.1" r="1.45" fill="#8a22a8"/><path d="M10.4 4 C12.9 4.2 14.8 5.9 15.1 8.4 M10.5 6.2 C11.8 6.4 12.7 7.2 12.9 8.5" fill="none" stroke="#8a22a8" stroke-width="0.95" stroke-linecap="round"/></svg>
<span class="t k" style="top:579.30px;font-size:14px;height:14px;color:#111;left:45.00px;transform:scaleX(0.8312);">27.07.20...</span>
<span class="t k" style="top:579.30px;font-size:14px;height:14px;color:#111;left:115.30px;transform:scaleX(0.8533);">+380939426195</span>
<span class="t k" style="top:579.30px;font-size:14px;height:14px;color:#111;left:252.80px;transform:scaleX(0.8515);">Запит оброблено успішно</span>
<span class="t k" style="top:579.30px;font-size:14px;height:14px;color:#111;left:661.70px;transform:scaleX(0.8762);">Власник</span>
<span class="t k" style="top:579.30px;font-size:14px;height:14px;color:#111;left:807.00px;transform:scaleX(0.8161);">marielgrace14@gm...</span>
<span class="t k" style="top:579.30px;font-size:14px;height:14px;color:#111;left:971.00px;transform:scaleX(0.8631);">Відправлення чека програм...</span>
<svg class="a" style="left:15.8px;top:601.0999999999999px;" width="19.8" height="21.4" viewBox="0 0 20 21.6"><path d="M7.4 0.9 L12.6 0.9 C17 0.9 19.1 3.2 19.1 7.4 L19.1 11.2 C19.1 15.4 17 17.7 12.6 17.7 L9.2 17.7 L5.2 20.9 L4.8 17 C2.2 16.1 0.9 14.2 0.9 11.2 L0.9 7.4 C0.9 3.2 3 0.9 7.4 0.9 Z" fill="#fff" stroke="#8a22a8" stroke-width="1.8" stroke-linejoin="round"/><path d="M6.3 5.6 C6 9.2 9.6 13.2 13.6 13.3" fill="none" stroke="#8a22a8" stroke-width="2.3" stroke-linecap="round"/><circle cx="6.5" cy="5.4" r="1.45" fill="#8a22a8"/><circle cx="13.5" cy="13.1" r="1.45" fill="#8a22a8"/><path d="M10.4 4 C12.9 4.2 14.8 5.9 15.1 8.4 M10.5 6.2 C11.8 6.4 12.7 7.2 12.9 8.5" fill="none" stroke="#8a22a8" stroke-width="0.95" stroke-linecap="round"/></svg>
<span class="t k" style="top:604.80px;font-size:14px;height:14px;color:#111;left:45.00px;transform:scaleX(0.8312);">27.07.20...</span>
<span class="t k" style="top:604.80px;font-size:14px;height:14px;color:#111;left:115.30px;transform:scaleX(0.8533);">+380939426195</span>
<span class="t k" style="top:604.80px;font-size:14px;height:14px;color:#111;left:252.80px;transform:scaleX(0.8515);">Запит оброблено успішно</span>
<span class="t k" style="top:604.80px;font-size:14px;height:14px;color:#111;left:661.70px;transform:scaleX(0.8762);">Власник</span>
<span class="t k" style="top:604.80px;font-size:14px;height:14px;color:#111;left:807.00px;transform:scaleX(0.8161);">marielgrace14@gm...</span>
<span class="t k" style="top:604.80px;font-size:14px;height:14px;color:#111;left:971.00px;transform:scaleX(0.8631);">Відправлення чека програм...</span>
<svg class="a" style="left:1173.4px;top:529.5px;" width="10" height="5.8" viewBox="0 0 10 5.8"><path d="M0.8 5.2 L5.0 0.9 L9.2 5.2" stroke="#333" stroke-width="1.9" fill="none" stroke-linejoin="miter"/></svg>
<div class="a" style="left:1170.2px;top:543px;width:16px;height:51.8px;background:#c2c2c2;border-radius:3px;"></div>
<svg class="a" style="left:1173.4px;top:655.5px;" width="10" height="5.8" viewBox="0 0 10 5.8"><path d="M0.8 0.8 L5.0 4.8999999999999995 L9.2 0.8" stroke="#333" stroke-width="1.9" fill="none" stroke-linejoin="miter"/></svg>
<div class="a" style="left:13px;top:673.4px;width:124.5px;height:25.3px;background:#e2e5e8;"></div>
<svg class="a" style="left:23px;top:674.8px;" width="20.5" height="22.1" viewBox="0 0 20 21.6"><path d="M7.4 0.9 L12.6 0.9 C17 0.9 19.1 3.2 19.1 7.4 L19.1 11.2 C19.1 15.4 17 17.7 12.6 17.7 L9.2 17.7 L5.2 20.9 L4.8 17 C2.2 16.1 0.9 14.2 0.9 11.2 L0.9 7.4 C0.9 3.2 3 0.9 7.4 0.9 Z" fill="#f3eef6" stroke="#8a22a8" stroke-width="1.8" stroke-linejoin="round"/><path d="M6.3 5.6 C6 9.2 9.6 13.2 13.6 13.3" fill="none" stroke="#8a22a8" stroke-width="2.3" stroke-linecap="round"/><circle cx="6.5" cy="5.4" r="1.45" fill="#8a22a8"/><circle cx="13.5" cy="13.1" r="1.45" fill="#8a22a8"/><path d="M10.4 4 C12.9 4.2 14.8 5.9 15.1 8.4 M10.5 6.2 C11.8 6.4 12.7 7.2 12.9 8.5" fill="none" stroke="#8a22a8" stroke-width="0.95" stroke-linecap="round"/></svg>
<span class="t" style="top:681.05px;font-size:12.9px;height:12.9px;color:#6a6a6a;left:49.00px;transform:scaleX(0.9844);">Viber-розсилка</span>
<div class="a" style="left:391.8px;top:224.8px;width:517px;height:246.9px;background:#f0f0ef;border:1px solid #c9c9c9;z-index:10;"></div>
<div class="a" style="left:392.8px;top:225.8px;width:515px;height:34.7px;background:#d9d9d8;z-index:10;"></div>
<svg class="a" style="left:401.3px;top:236.2px;z-index:10;overflow:visible;" width="13.7" height="13.7" viewBox="0 0 13.7 13.7"><path d="M5.66 2.35 L5.78 0.08 L7.92 0.08 L8.04 2.35 L9.19 2.82 L10.88 1.31 L12.39 2.82 L10.88 4.51 L11.35 5.66 L13.62 5.78 L13.62 7.92 L11.35 8.04 L10.88 9.19 L12.39 10.88 L10.88 12.39 L9.19 10.88 L8.04 11.35 L7.92 13.62 L5.78 13.62 L5.66 11.35 L4.51 10.88 L2.82 12.39 L1.31 10.88 L2.82 9.19 L2.35 8.04 L0.08 7.92 L0.08 5.78 L2.35 5.66 L2.82 4.51 L1.31 2.82 L2.82 1.31 L4.51 2.82 Z" fill="none" stroke="#ececec" stroke-width="1.6" stroke-linejoin="round"/><path d="M5.66 2.35 L5.78 0.08 L7.92 0.08 L8.04 2.35 L9.19 2.82 L10.88 1.31 L12.39 2.82 L10.88 4.51 L11.35 5.66 L13.62 5.78 L13.62 7.92 L11.35 8.04 L10.88 9.19 L12.39 10.88 L10.88 12.39 L9.19 10.88 L8.04 11.35 L7.92 13.62 L5.78 13.62 L5.66 11.35 L4.51 10.88 L2.82 12.39 L1.31 10.88 L2.82 9.19 L2.35 8.04 L0.08 7.92 L0.08 5.78 L2.35 5.66 L2.82 4.51 L1.31 2.82 L2.82 1.31 L4.51 2.82 Z" fill="#0c0c0c" stroke="#0c0c0c" stroke-width="0.5" stroke-linejoin="round"/><circle cx="6.85" cy="6.85" r="2.329" fill="#f4f4f4"/></svg>
<span class="t" style="top:237.30px;font-size:13.4px;height:13.4px;color:#050505;font-weight:700;z-index:10;left:425.00px;transform:scaleX(0.9435);">Створення масової розсилки</span>
<svg class="a" style="left:876.5px;top:237px;z-index:10;" width="12" height="12" viewBox="0 0 12 12"><path d="M0.5 0.5 L11.5 11.5 M11.5 0.5 L0.5 11.5" stroke="#222" stroke-width="1.2" fill="none"/></svg>
<span class="t" style="top:322.80px;font-size:12px;height:12px;color:#7a7a7a;z-index:10;left:436.60px;transform:scaleX(0.9809);">Масова розсилка</span>
<div class="a" style="left:439px;top:336.5px;width:376px;height:27.4px;background:#fff;border:1px solid #8ab6ee;border-radius:1px;z-index:10;"></div>
<div class="a" style="left:443.6px;top:344px;width:1px;height:13.5px;background:#111;z-index:10;"></div>
<span class="t k" style="top:344.30px;font-size:13.4px;height:13.4px;color:#0a0a0a;z-index:10;left:444.20px;transform:scaleX(0.9186);">Акція до -15%</span>
<svg class="a" style="left:796.5px;top:348.8px;z-index:10;" width="9.5" height="5.6" viewBox="0 0 9.5 5.6"><path d="M0.8 0.8 L4.75 4.699999999999999 L8.7 0.8" stroke="#111" stroke-width="1.7" fill="none" stroke-linejoin="miter"/></svg>
<svg class="a" style="left:850.6px;top:322.6px;z-index:10;" width="12.6" height="12.6" viewBox="0 0 12.6 12.6"><circle cx="5.184" cy="5.184" r="4.284" stroke="#111" stroke-width="1.8" fill="none"/><path d="M8.26848 8.26848 L11.9 11.9" stroke="#111" stroke-width="2.1" stroke-linecap="round"/></svg>
<svg class="a" style="left:821.7px;top:341.3px;z-index:10;" width="15.6" height="19.7" viewBox="0 0 16 19.5"><g fill="none" stroke="#222" stroke-width="1.3" stroke-linejoin="round"><path d="M0.7 0.7 L9.6 0.7 L15.3 6.4 L15.3 18.8 L0.7 18.8 Z"/><path d="M9.4 0.9 L9.4 6.6 L15.1 6.6"/><path d="M7.6 8.6 L7.6 15.4 M4.2 12 L11 12"/></g></svg>
<svg class="a" style="left:847.2px;top:341.6px;z-index:10;" width="20" height="19.5" viewBox="0 0 20 19.5"><g fill="none" stroke="#151515" stroke-width="1.35" stroke-linejoin="round" stroke-linecap="round"><path d="M1.9 16.5 L3.1 12 L13.9 0.7 L18.7 5.1 L7.2 15.9 Z"/><path d="M11.2 3.6 L16.1 8"/></g><path d="M0 18.8 L19.6 18.8" stroke="#151515" stroke-width="1.3"/></svg>
<div class="a" style="left:570px;top:428.3px;width:83px;height:27.6px;background:#fff;border:1px solid #7fb0ec;border-radius:3px;z-index:10;"></div>
<span class="t" style="top:436.70px;font-size:13px;height:13px;color:#0a0a0a;font-weight:700;z-index:10;left:581.00px;transform:scaleX(0.9883);">Записати</span>
<div class="a" style="left:676px;top:428.3px;width:83px;height:27.6px;background:#fff;border:1px solid #b3b3b3;border-radius:3px;z-index:10;"></div>
<span class="t k" style="top:436.80px;font-size:12.8px;height:12.8px;color:#111;z-index:10;left:686.30px;transform:scaleX(0.9749);">Скасувати</span>
</body></html>
